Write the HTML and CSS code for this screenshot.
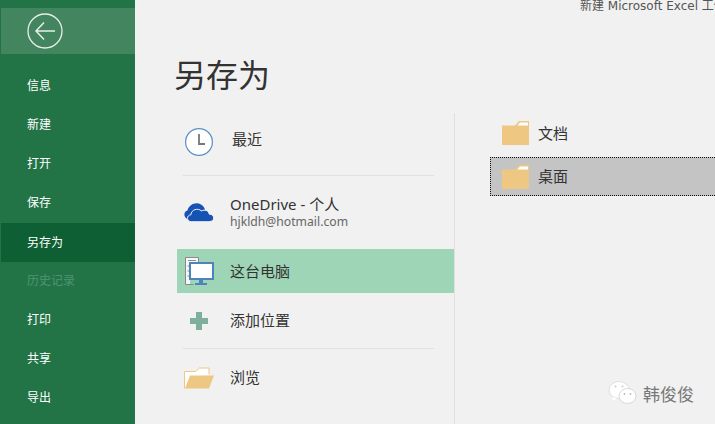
FILE: index.html
```html
<!DOCTYPE html>
<html lang="zh-CN">
<head>
<meta charset="utf-8">
<title>另存为</title>
<link rel="stylesheet" href="styles.css">
</head>
<body>
<div class="app">
  <nav class="side">
    <div class="back">
      <svg class="back-icon" width="36" height="36" viewBox="0 0 36 36"><circle cx="18" cy="18" r="17" fill="none" stroke="#e6efe9" stroke-width="1.3"/><path d="M28 18H9M17 9.500L9 18l8 8.500" fill="none" stroke="#e6efe9" stroke-width="1.500"/></svg>
    </div>
    <ul class="menu">
      <li class="menu-item">信息</li>
      <li class="menu-item">新建</li>
      <li class="menu-item">打开</li>
      <li class="menu-item">保存</li>
      <li class="menu-item active">另存为</li>
      <li class="menu-item disabled">历史记录</li>
      <li class="menu-item">打印</li>
      <li class="menu-item">共享</li>
      <li class="menu-item">导出</li>
    </ul>
  </nav>
  <main class="main">
    <div class="titlebar">新建 Microsoft Excel 工作簿</div>
    <h1 class="heading">另存为</h1>
    <div class="columns">
      <section class="places">
        <div class="place place-recent">
          <svg class="place-icon" width="28" height="28" viewBox="0 0 28 28"><circle cx="14" cy="14" r="13.400" fill="#fff" stroke="#5a8ec8" stroke-width="1.200"/><path d="M14 6v10h6" fill="none" stroke="#777" stroke-width="1.800"/></svg>
          <span class="place-name">最近</span>
        </div>
        <div class="rule"></div>
        <div class="place place-drive">
          <svg class="place-icon" width="30" height="19" viewBox="0 0 30 19"><path d="M4 16C-.5 15-1 8.500 3.500 7.500 5 1.500 12-1.500 17 1.500c2.500 1.500 4 3.500 4 6H9v8.500z" fill="#1553b5"/><path d="M7.500 18.700c-5 0-5.500-6.500-.5-7 0-5 7-7.200 10.500-3.700 3.200-2 7.300-.3 7.800 3.200 5.500-.2 6.200 7.500-.3 7.500z" fill="#1553b5" stroke="#f1f1f1" stroke-width="1"/></svg>
          <div class="drive-text">
            <div class="place-name">OneDrive - 个人</div>
            <div class="place-sub">hjkldh@hotmail.com</div>
          </div>
        </div>
        <div class="place place-pc selected">
          <svg class="place-icon" width="29" height="28" viewBox="0 0 29 28"><path d="M.5 27.500V.5h13v6H5v21z" fill="#f7f7f7"/><path d="M13.500 5V.5H.5v27h8" fill="none" stroke="#8a8a8a"/><path d="M3 3.500h8M2.500 9h2M2.500 14h2M2.500 19h2" stroke="#8a8a8a"/><rect x="5" y="6" width="23" height="16" fill="#fff" stroke="#4d84bd" stroke-width="2"/><path d="M14 23h4v3h-4zM10 26h12v2H10z" fill="#4d84bd"/></svg>
          <span class="place-name">这台电脑</span>
        </div>
        <div class="place place-add">
          <svg class="place-icon" width="30" height="18" viewBox="0 0 30 18"><path d="M12 0h6v6h6v6h-6v6h-6v-6H6V6h6z" fill="#7daf9c"/></svg>
          <span class="place-name">添加位置</span>
        </div>
        <div class="rule"></div>
        <div class="place place-browse">
          <svg class="place-icon" width="30" height="22" viewBox="0 0 30 22"><path d="M.5 21.500V4.500h11l4-3.500h9.500v6" fill="#fff" stroke="#eec883"/><path d="M1 21.500l5-13h24l-5 13z" fill="#eec883"/></svg>
          <span class="place-name">浏览</span>
        </div>
      </section>
      <section class="folders">
        <div class="folder">
          <svg class="folder-icon" width="27" height="24" viewBox="0 0 27 24"><path d="M0 4.500h13L17 0h10v24H0z" fill="#eec883"/><path d="M15.500 4.500l2.500-3h8v3z" fill="#fff"/></svg>
          <span>文档</span>
        </div>
        <div class="folder folder-focus">
          <svg class="folder-icon" width="27" height="24" viewBox="0 0 27 24"><path d="M0 4.500h13L17 0h10v24H0z" fill="#eec883"/><path d="M15.500 4.500l2.500-3h8v3z" fill="#fff"/></svg>
          <span>桌面</span>
        </div>
      </section>
    </div>
  </main>
  <aside class="mark">
    <svg width="30" height="26" viewBox="0 0 30 26"><ellipse cx="11" cy="10" rx="10" ry="8.500" fill="#fff" stroke="#d8d8d8" stroke-width=".8"/><path d="M5 17l-1 4 5-2.500z" fill="#fff"/><ellipse cx="19.500" cy="16" rx="8.500" ry="7.500" fill="#fff" stroke="#cfcfcf" stroke-width=".8"/><circle cx="7.500" cy="6.500" r="1" fill="#ccc"/><circle cx="14.500" cy="6.500" r="1" fill="#ccc"/><circle cx="16.500" cy="14" r=".9" fill="#bbb"/><circle cx="22.500" cy="14" r=".9" fill="#bbb"/></svg>
    <span>韩俊俊</span>
  </aside>
</div>
</body>
</html>
```
FILE: styles.css
```css
* { box-sizing: border-box; }
html, body { margin: 0; padding: 0; }
body {
  width: 715px;
  height: 424px;
  overflow: hidden;
  background: #f1f1f1;
  font-family: "Noto Sans", "Noto Sans CJK SC", sans-serif;
  color: #333;
}
.app { position: relative; display: flex; width: 715px; height: 424px; overflow: hidden; }

.side { flex: 0 0 135px; background: #227447; padding-top: 8px; }
.back { height: 46px; margin-left: 1px; padding: 5px 0 0 26px; background: #43855f; }
.back-icon { display: block; }
.menu { list-style: none; margin: 12px 0 0; padding: 0; }
.menu-item { height: 39px; line-height: 39px; padding-left: 27px; font-size: 12px; color: #fff; }
.menu-item.active { margin: 1px 0 0 1px; padding-left: 26px; background: #0f5f34; }
.menu-item.disabled { height: 38px; line-height: 38px; color: #4e9470; }

.main { flex: 1; min-width: 0; display: flex; flex-direction: column; }
.titlebar { height: 13px; padding-left: 445px; font-family: "DejaVu Sans", "Noto Sans CJK SC", sans-serif; font-size: 12px; line-height: 13px; white-space: nowrap; overflow: hidden; color: #555; }
.heading { margin: 36px 0 0 39px; font-size: 32px; line-height: 52px; font-weight: 400; color: #333; }
.columns { display: flex; margin-top: 12px; flex: 1; min-height: 0; }

.places { flex: 0 0 278px; margin-left: 42px; border-right: 1px solid #e0e0e0; }
.place { display: flex; align-items: center; padding-left: 8px; font-size: 15px; color: #333; }
.place-icon { flex: none; display: block; }
.place-recent { height: 62px; padding-bottom: 4px; }
.place-recent .place-name { margin-left: 19px; padding-bottom: 7px; }
.place-drive { height: 73px; padding-left: 7px; }
.place-drive .place-icon { margin-right: 16px; }
.place-pc { height: 44px; }
.place-add { height: 55px; padding-left: 7px; }
.place-browse { height: 60px; padding: 0 0 3px 7px; }
.place-pc .place-name { margin-left: 16px; padding-bottom: 2px; }
.place-add .place-name { margin-left: 16px; padding-bottom: 2px; }
.place-browse .place-name { margin-left: 16px; padding-bottom: 2px; }
.selected { background: #9fd5b7; }
.drive-text { display: flex; flex-direction: column; }
.drive-text .place-name { line-height: 18px; }
.place-sub { font-size: 12.200px; line-height: 17px; color: #666; }
.rule { height: 1px; margin: 0 20px 0 6px; background: #e0e0e0; }

.folders { flex: 1; min-width: 0; padding-left: 35px; }
.folder { display: flex; align-items: center; height: 40px; padding-left: 12px; font-size: 15px; color: #333; }
.folder span { padding-bottom: 2px; }
.folder-icon { flex: none; margin: 0 9px 0 0; }
.folder-focus { height: 39px; margin-top: 4px; background: #c4c4c4; border: 1px dotted #111; border-right: none; padding-left: 11px; }

.mark { position: absolute; left: 608px; top: 380px; display: flex; align-items: center; gap: 5px; font-size: 17px; color: #777; }
.mark svg { display: block; }
```
